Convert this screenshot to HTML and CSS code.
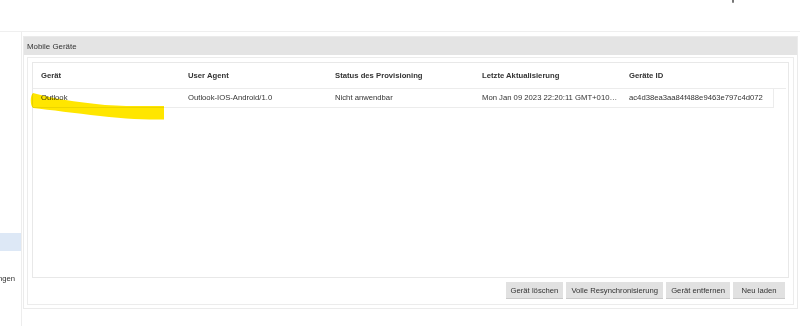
FILE: index.html
```html
<!DOCTYPE html>
<html lang="de">
<head>
    <meta charset="UTF-8">
    <meta name="viewport" content="width=device-width, initial-scale=1.0">
    <title>Mobile Geräte</title>
    <link rel="stylesheet" href="styles.css">
</head>
<body>
    <div class="topbar">
        <span class="top-mark"></span>
    </div>

    <div class="main">
        <nav class="sidebar">
            <div class="nav-item active"></div>
            <div class="nav-item"></div>
            <div class="nav-item"><span>Einstellungen</span></div>
        </nav>

        <div class="content">
            <div class="panel">
                <div class="panel-header">Mobile Geräte</div>
                <div class="panel-body">
                    <div class="fieldset">
                        <div class="grid">
                            <div class="grid-head">
                                <div class="cell">Gerät</div>
                                <div class="cell">User Agent</div>
                                <div class="cell">Status des Provisioning</div>
                                <div class="cell">Letzte Aktualisierung</div>
                                <div class="cell">Geräte ID</div>
                            </div>
                            <div class="grid-row">
                                <div class="cell">Outlook</div>
                                <div class="cell">Outlook-IOS-Android/1.0</div>
                                <div class="cell">Nicht anwendbar</div>
                                <div class="cell">Mon Jan 09 2023 22:20:11 GMT+0100 (Mitteleuropäische Normalzeit)</div>
                                <div class="cell last">ac4d38ea3aa84f488e9463e797c4d072</div>
                            </div>

                            <!-- marker stroke drawn over the screenshot -->
                            <svg class="marker" width="136" height="30" viewBox="0 0 136 30">
                                <path d="M3 2 C20 7 45 11 75 14 C100 15.5 120 15 134 15 L134 28.5 C115 28.5 95 28 70 25 C45 22 20 19 3 17 C0 15 0 4 3 2 Z" fill="#ffe600"/>
                            </svg>
                        </div>

                        <div class="actions">
                            <button class="btn">Gerät löschen</button>
                            <button class="btn">Volle Resynchronisierung</button>
                            <button class="btn">Gerät entfernen</button>
                            <button class="btn">Neu laden</button>
                        </div>
                    </div>
                </div>
            </div>
        </div>
    </div>
</body>
</html>
```

FILE: styles.css
```css
* {
    margin: 0;
    padding: 0;
    box-sizing: border-box;
}

body {
    font-family: "Liberation Sans", Arial, sans-serif;
    font-size: 7.7px;
    color: #333;
    background: #fff;
    overflow: hidden;
}

.topbar {
    height: 32px;
    border-bottom: 1px solid #efefef;
    display: flex;
    justify-content: flex-end;
    padding-right: 66px;
}

.top-mark {
    width: 2px;
    height: 3px;
    background: #777;
    border-radius: 0 0 1px 1px;
}

.main {
    display: flex;
    height: 294px;
}

.sidebar {
    width: 22px;
    flex-shrink: 0;
    border-right: 1px solid #ededed;
    padding-top: 201px;
    overflow: hidden;
}

.nav-item {
    height: 18px;
    display: flex;
    align-items: center;
    justify-content: flex-end;
    padding-right: 6px;
    white-space: nowrap;
    overflow: hidden;
}

.nav-item.active {
    background: #dde8f6;
}

.content {
    flex: 1;
    padding: 4px 2px 0 1px;
}

.panel {
    height: 273px;
    border: 1px solid #ebebeb;
    display: flex;
    flex-direction: column;
}

.panel-header {
    height: 18px;
    background: #e4e4e4;
    display: flex;
    align-items: center;
    padding-left: 3px;
    font-size: 7.9px;
}

.panel-body {
    flex: 1;
    padding: 2px 3px 3px;
    display: flex;
}

.fieldset {
    flex: 1;
    border: 1px solid #ececec;
    padding: 4px 4px 5px;
    display: flex;
    flex-direction: column;
}

.grid {
    position: relative;
    height: 216px;
    border: 1px solid #e8e8e8;
}

.grid-head,
.grid-row {
    display: flex;
}

.grid-head {
    height: 26px;
    margin-right: 2px;
    border-bottom: 1px solid #ececec;
    font-weight: bold;
}

.grid-row {
    width: 741px;
    height: 19px;
    border-bottom: 1px solid #ececec;
    border-right: 1px solid #ececec;
}

.cell {
    width: 147px;
    padding: 0 3px 0 8px;
    display: flex;
    align-items: center;
    white-space: nowrap;
    overflow: hidden;
}

.grid-row .cell {
    display: block;
    line-height: 18px;
    text-overflow: ellipsis;
}

.grid-row .cell.last {
    width: 152px;
}

.marker {
    position: absolute;
    left: -3px;
    top: 28px;
    mix-blend-mode: multiply;
}

.actions {
    display: flex;
    justify-content: flex-end;
    gap: 3px;
    margin-top: 4px;
    padding-right: 4px;
}

.btn {
    height: 17px;
    min-width: 52px;
    padding: 0 5px;
    border: none;
    border-bottom: 1px solid #c9c9c9;
    background: #e1e1e1;
    font-family: inherit;
    font-size: 7.7px;
    color: #333;
}
```
